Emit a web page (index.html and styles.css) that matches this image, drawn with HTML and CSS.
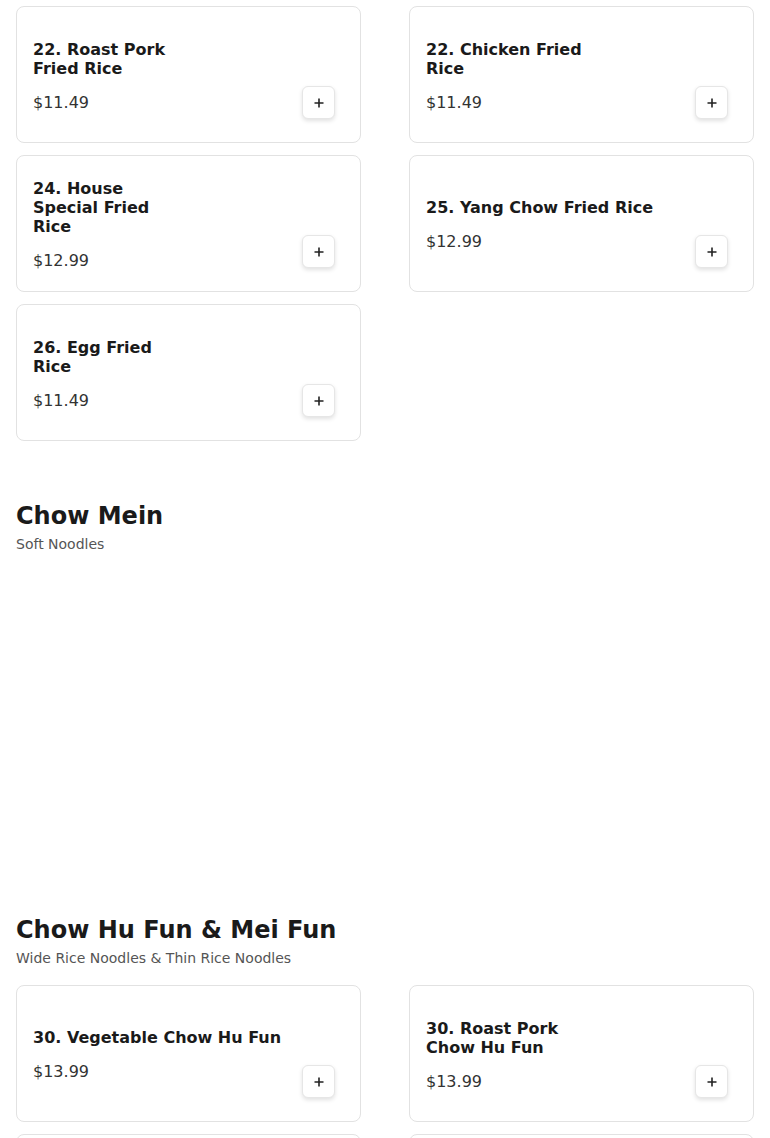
FILE: index.html
```html
<!DOCTYPE html>
<html lang="en">
<head>
    <meta charset="UTF-8">
    <meta name="viewport" content="width=device-width, initial-scale=1.0">
    <title>Menu</title>
    <link rel="stylesheet" href="styles.css">
</head>
<body>
    <div class="menu">
        <section class="menu-section">
            <div class="item-grid">
                <div class="item-card">
                    <div class="item-info">
                        <h3 class="item-name">22. Roast Pork<br>Fried Rice</h3>
                        <div class="item-price">$11.49</div>
                    </div>
                    <button class="add-btn" aria-label="Add"><svg viewBox="0 0 12 12"><path d="M6 1.5v9M1.5 6h9"/></svg></button>
                </div>
                <div class="item-card">
                    <div class="item-info">
                        <h3 class="item-name">22. Chicken Fried<br>Rice</h3>
                        <div class="item-price">$11.49</div>
                    </div>
                    <button class="add-btn" aria-label="Add"><svg viewBox="0 0 12 12"><path d="M6 1.5v9M1.5 6h9"/></svg></button>
                </div>
                <div class="item-card">
                    <div class="item-info">
                        <h3 class="item-name">24. House<br>Special Fried<br>Rice</h3>
                        <div class="item-price">$12.99</div>
                    </div>
                    <button class="add-btn" aria-label="Add"><svg viewBox="0 0 12 12"><path d="M6 1.5v9M1.5 6h9"/></svg></button>
                </div>
                <div class="item-card">
                    <div class="item-info">
                        <h3 class="item-name">25. Yang Chow Fried Rice</h3>
                        <div class="item-price">$12.99</div>
                    </div>
                    <button class="add-btn" aria-label="Add"><svg viewBox="0 0 12 12"><path d="M6 1.5v9M1.5 6h9"/></svg></button>
                </div>
                <div class="item-card">
                    <div class="item-info">
                        <h3 class="item-name">26. Egg Fried<br>Rice</h3>
                        <div class="item-price">$11.49</div>
                    </div>
                    <button class="add-btn" aria-label="Add"><svg viewBox="0 0 12 12"><path d="M6 1.5v9M1.5 6h9"/></svg></button>
                </div>
            </div>
        </section>

        <section class="menu-section">
            <h2 class="section-title">Chow Mein</h2>
            <p class="section-sub">Soft Noodles</p>
            <div class="item-grid empty"></div>
        </section>

        <section class="menu-section">
            <h2 class="section-title">Chow Hu Fun &amp; Mei Fun</h2>
            <p class="section-sub">Wide Rice Noodles &amp; Thin Rice Noodles</p>
            <div class="item-grid">
                <div class="item-card">
                    <div class="item-info">
                        <h3 class="item-name">30. Vegetable Chow Hu Fun</h3>
                        <div class="item-price">$13.99</div>
                    </div>
                    <button class="add-btn" aria-label="Add"><svg viewBox="0 0 12 12"><path d="M6 1.5v9M1.5 6h9"/></svg></button>
                </div>
                <div class="item-card">
                    <div class="item-info">
                        <h3 class="item-name">30. Roast Pork<br>Chow Hu Fun</h3>
                        <div class="item-price">$13.99</div>
                    </div>
                    <button class="add-btn" aria-label="Add"><svg viewBox="0 0 12 12"><path d="M6 1.5v9M1.5 6h9"/></svg></button>
                </div>
                <div class="item-card">
                    <div class="item-info">
                        <h3 class="item-name">31. Chicken<br>Chow Hu Fun</h3>
                        <div class="item-price">$13.99</div>
                    </div>
                    <button class="add-btn" aria-label="Add"><svg viewBox="0 0 12 12"><path d="M6 1.5v9M1.5 6h9"/></svg></button>
                </div>
                <div class="item-card">
                    <div class="item-info">
                        <h3 class="item-name">32. Beef<br>Chow Hu Fun</h3>
                        <div class="item-price">$14.49</div>
                    </div>
                    <button class="add-btn" aria-label="Add"><svg viewBox="0 0 12 12"><path d="M6 1.5v9M1.5 6h9"/></svg></button>
                </div>
            </div>
        </section>
    </div>
</body>
</html>
```

FILE: styles.css
```css
body {
    margin: 0;
    background: #fff;
    font-family: "DejaVu Sans", Verdana, sans-serif;
    color: #1a1a1a;
}
.menu {
    padding: 6px 16px 0;
}
.menu-section + .menu-section {
    margin-top: 59px;
}
.section-title {
    margin: 0;
    font-size: 24px;
    line-height: 32px;
    font-weight: 700;
    color: #1a1a1a;
}
.section-sub {
    margin: 2px 0 0;
    font-size: 14px;
    line-height: 20px;
    color: #555;
}
.section-sub + .item-grid {
    margin-top: 17px;
}
.item-grid {
    display: grid;
    grid-template-columns: 1fr 1fr;
    column-gap: 48px;
    row-gap: 12px;
}
.item-grid.empty {
    height: 284px;
}
.item-card {
    display: flex;
    box-sizing: border-box;
    height: 137px;
    padding: 16px 25px 23px 16px;
    border: 1px solid #e2e2e2;
    border-radius: 8px;
    background: #fff;
}
.item-info {
    flex: 1;
    display: flex;
    flex-direction: column;
    justify-content: center;
    padding-top: 10px;
}
.item-name {
    margin: 0;
    font-size: 16px;
    line-height: 19px;
    font-weight: 700;
    color: #1a1a1a;
}
.item-price {
    margin-top: 15px;
    font-size: 16px;
    line-height: 20px;
    color: #333;
}
.add-btn {
    align-self: flex-end;
    display: flex;
    align-items: center;
    justify-content: center;
    width: 33px;
    height: 33px;
    padding: 0;
    border: 1px solid #e6e6e6;
    border-radius: 6px;
    background: #fff;
    box-shadow: 0 2px 4px rgba(0,0,0,0.12);
    cursor: pointer;
}
.add-btn svg {
    width: 12px;
    height: 12px;
    fill: none;
    stroke: #222;
    stroke-width: 1.6;
}
```
